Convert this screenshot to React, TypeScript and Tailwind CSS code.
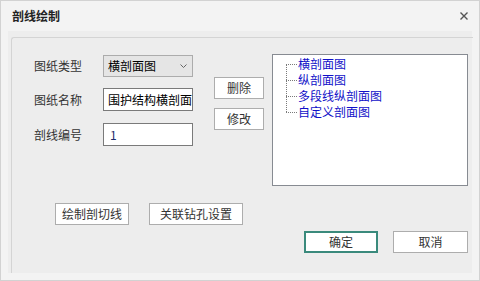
import React from 'react';

const TREE_ITEMS = ['横剖面图', '纵剖面图', '多段线纵剖面图', '自定义剖面图'];

const Btn: React.FC<{ label: string; className?: string }> = ({ label, className = '' }) => (
  <button
    className={`h-[22px] border border-[#adadad] bg-white text-[12px] leading-none text-[#333] flex items-center justify-center ${className}`}
  >
    {label}
  </button>
);

export default function App() {
  return (
    <div className="w-[480px] h-[281px] bg-[#f3f3f3] border border-[#d2d2d2] flex flex-col font-['Microsoft_YaHei','Noto_Sans_CJK_SC',sans-serif] text-[12px] text-[#333] select-none">
      {/* Title bar */}
      <div className="h-[30px] shrink-0 flex items-center justify-between pl-[11px] pr-[10px]">
        <span className="text-[12px] font-bold text-[#222]">剖线绘制</span>
        <svg width="8" height="8" viewBox="0 0 8 8" className="mr-[1px]">
          <path d="M0.5 0.5 L7.5 7.5 M7.5 0.5 L0.5 7.5" stroke="#555" strokeWidth="1.4" />
        </svg>
      </div>

      {/* Body */}
      <div className="flex-1 mx-[7px] mb-[7px] bg-[#ededed] pt-[6px] pl-[3px] flex">
        <div className="flex-1 border-t border-l border-[#d4d4d4] rounded-tl-[3px] pl-[22px] pt-[16px] pr-[5px] flex flex-col">
          <div className="flex">
            {/* Form */}
            <div className="flex flex-col w-[159px]">
              <div className="flex items-center h-[22px] mt-[1px]">
                <span className="w-[69px]">图纸类型</span>
                <div className="w-[90px] h-[22px] bg-[#e5e5e5] border border-[#acacac] flex items-center justify-between pl-[4px] pr-[5px] text-black">
                  <span>横剖面图</span>
                  <svg width="7" height="4" viewBox="0 0 7 4">
                    <path d="M0.5 0.5 L3.5 3.5 L6.5 0.5" stroke="#666" strokeWidth="1" fill="none" />
                  </svg>
                </div>
              </div>
              <div className="flex items-center h-[23px] mt-[11px]">
                <span className="w-[69px]">图纸名称</span>
                <div className="w-[90px] h-[23px] bg-white border border-[#7a7a7a] flex items-center pl-[4px] overflow-hidden whitespace-nowrap text-black">
                  围护结构横剖面
                </div>
              </div>
              <div className="flex items-center h-[23px] mt-[12px]">
                <span className="w-[69px]">剖线编号</span>
                <div className="w-[90px] h-[23px] bg-white border border-[#7a7a7a] flex items-center pl-[6px] text-[#1b2a6b]">
                  1
                </div>
              </div>
            </div>

            {/* Side buttons */}
            <div className="flex flex-col ml-[21px] pt-[23px] gap-[9px]">
              <Btn label="删除" className="w-[50px]" />
              <Btn label="修改" className="w-[50px]" />
            </div>

            {/* Tree */}
            <div className="ml-[8px] w-[196px] h-[132px] bg-white border border-[#878b92] pt-[1px] pl-[13px]">
              <div className="relative flex flex-col">
                <div className="absolute left-0 top-[8px] bottom-[8px] border-l border-dotted border-[#7a7a7a]" />
                {TREE_ITEMS.map(item => (
                  <div key={item} className="flex items-center h-[16px]">
                    <span className="w-[11px] border-t border-dotted border-[#7a7a7a]" />
                    <span className="ml-[1px] text-[#1010c8] leading-none">{item}</span>
                  </div>
                ))}
              </div>
            </div>
          </div>

          {/* Bottom tool buttons */}
          <div className="flex gap-[20px] mt-[17px] ml-[21px]">
            <Btn label="绘制剖切线" className="w-[74px]" />
            <Btn label="关联钻孔设置" className="w-[94px]" />
          </div>

          {/* Dialog buttons */}
          <div className="flex justify-end gap-[15px] mt-[6px]">
            <button className="w-[74px] h-[22px] border-2 border-[#3a8a7c] bg-white text-[12px] leading-none text-[#333] flex items-center justify-center">
              确定
            </button>
            <Btn label="取消" className="w-[75px]" />
          </div>
        </div>
      </div>
    </div>
  );
}
